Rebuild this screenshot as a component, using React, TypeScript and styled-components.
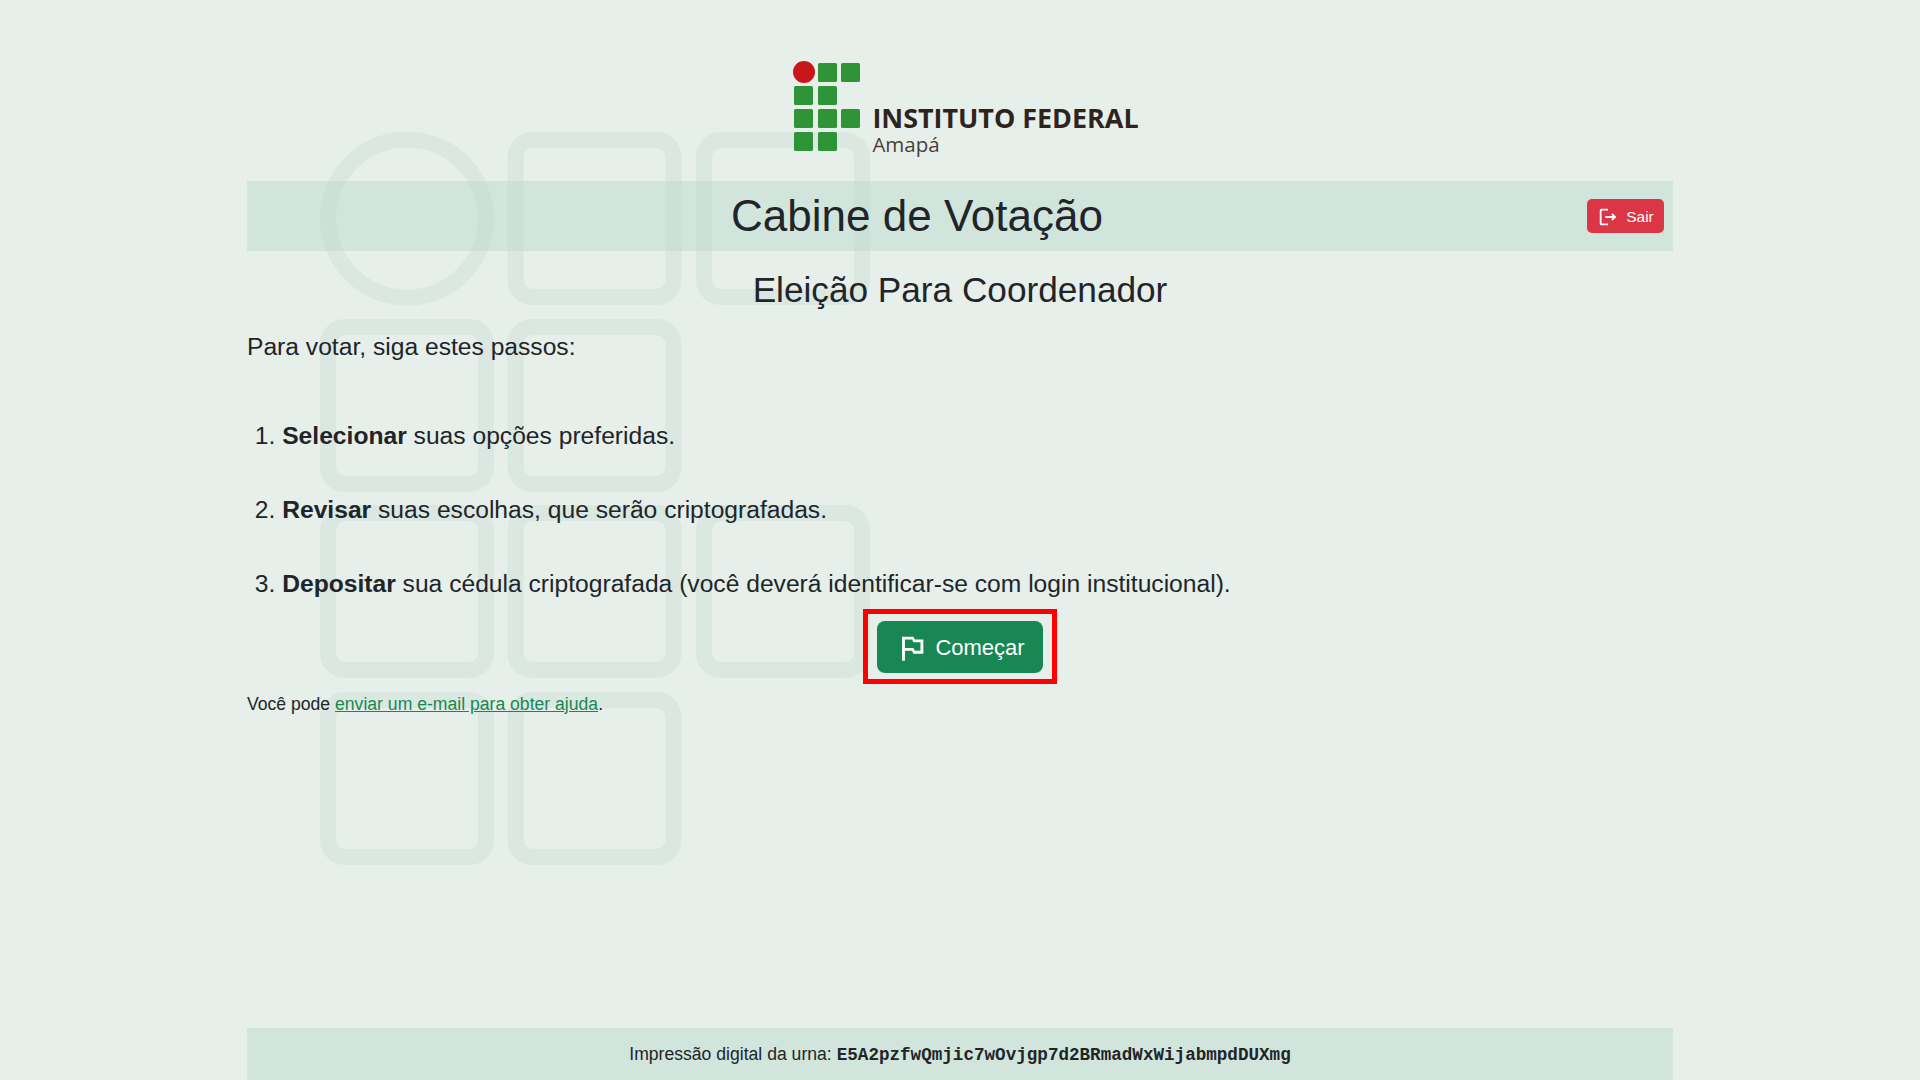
import React from "react";
import styled, { createGlobalStyle } from "styled-components";
import { MdOutlinedFlag, MdOutlineLogout } from "react-icons/md";

const GlobalStyle = createGlobalStyle`
    html, body {
        margin: 0;
        padding: 0;
        background-color: #e6efea;
        color: #212529;
        font-family: "Liberation Sans", Arial, sans-serif;
        font-size: 17.6px;
    }
`;

const Page = styled.div`
    position: relative;
    width: 1426px;
    height: 1080px;
    margin: 0 auto;
    display: flex;
    flex-direction: column;
`;

const Watermark = styled.svg`
    position: absolute;
    left: 73px;
    top: 132px;
    width: 552px;
    height: 733px;
    color: #dbe7e1;
`;

const Content = styled.main`
    position: relative;
    flex: 1;
    display: flex;
    flex-direction: column;
`;

const LogoRow = styled.div`
    display: flex;
    justify-content: center;
    align-items: flex-start;
    gap: 12px;
    height: 181px;
    padding: 61px 0 0 12px;
    box-sizing: border-box;
`;

const LogoText = styled.div`
    display: flex;
    flex-direction: column;
    margin-top: 42px;
    font-family: "Open Sans", sans-serif;
`;

const LogoName = styled.span`
    font-size: 26.9px;
    line-height: 29px;
    font-weight: 700;
    color: #2f241d;
    white-space: nowrap;
`;

const LogoPlace = styled.span`
    font-size: 20.5px;
    line-height: 24px;
    color: #4a4038;
`;

const Header = styled.header`
    display: flex;
    align-items: center;
    height: 70px;
    padding-right: 9px;
    background-color: rgba(176, 212, 196, 0.38);
`;

const Title = styled.h1`
    flex: 1;
    margin: 0;
    font-size: 44px;
    line-height: 68px;
    font-weight: 400;
    text-align: center;
`;

const Button = styled.button<{ $color: string; $big?: boolean }>`
    display: inline-flex;
    align-items: center;
    justify-content: center;
    border: none;
    color: #fff;
    font-family: inherit;
    background-color: ${(p) => p.$color};
    border-radius: ${(p) => (p.$big ? "8px" : "5px")};
    width: ${(p) => (p.$big ? "166px" : "77px")};
    height: ${(p) => (p.$big ? "52px" : "34px")};
    gap: ${(p) => (p.$big ? "6px" : "7px")};
    font-size: ${(p) => (p.$big ? "22px" : "15.4px")};
    padding: 2px 0 0;
`;

const Subtitle = styled.h2`
    margin: 15px 0 0;
    font-size: 35.2px;
    line-height: 48px;
    font-weight: 400;
    text-align: center;
`;

const Lead = styled.p`
    margin: 14px 0 0;
    font-size: 24.64px;
    line-height: 37px;
`;

const Steps = styled.ol`
    margin: 52px 0 0;
    padding: 0 0 0 35.2px;
    font-size: 24.64px;
    line-height: 37px;
`;

const Step = styled.li`
    margin-bottom: 37px;

    &:last-child {
        margin-bottom: 0;
    }
`;

const StartBox = styled.div`
    align-self: center;
    display: flex;
    margin-top: 7px;
    padding: 7px 9px 6px;
    border: 5px solid #ff0000;
`;

const Help = styled.p`
    margin: 7px 0 0;
    line-height: 26.4px;
`;

const HelpLink = styled.a`
    color: #198754;
    text-decoration: underline;
`;

const Footer = styled.footer`
    position: relative;
    height: 52px;
    padding-top: 1px;
    box-sizing: border-box;
    display: flex;
    align-items: center;
    justify-content: center;
    gap: 5px;
    background-color: rgba(176, 212, 196, 0.38);
`;

const Fingerprint = styled.code`
    font-family: "Liberation Mono", monospace;
    font-weight: 700;
    font-size: 17.6px;
`;

const squares = [
    [187.5, 0], [376, 0],
    [0, 187], [187.5, 187],
    [0, 373], [187.5, 373], [376, 373],
    [0, 560], [187.5, 560],
];

const logoSquares = [
    [24, 0], [47, 0],
    [0, 23], [24, 23],
    [0, 46], [24, 46], [47, 46],
    [0, 69], [24, 69],
];

const LogoMark = styled.svg`
    flex-shrink: 0;
`;

const IfLogo = () => (
    <LogoMark width="67" height="90" viewBox="0 0 67 90">
        <circle cx="11" cy="11" r="11" fill="#c9161b" />
        {logoSquares.map(([x, y]) => (
            <rect key={`${x}-${y}`} x={x + 1} y={y + 2} width="19" height="19" rx="1.5" fill="#2f9438" />
        ))}
    </LogoMark>
);

export default function App() {
    return (
        <Page>
            <GlobalStyle />
            <Watermark viewBox="0 0 552 733" fill="none" stroke="currentColor" strokeWidth="16">
                <circle cx="87" cy="86.5" r="79" />
                {squares.map(([x, y]) => (
                    <rect key={`${x}-${y}`} x={x + 8} y={y + 8} width="158" height="157" rx="17" />
                ))}
            </Watermark>
            <Content>
                <LogoRow>
                    <IfLogo />
                    <LogoText>
                        <LogoName>INSTITUTO FEDERAL</LogoName>
                        <LogoPlace>Amapá</LogoPlace>
                    </LogoText>
                </LogoRow>
                <Header>
                    <Title>Cabine de Votação</Title>
                    <Button $color="#dc3545">
                        <MdOutlineLogout size={22} />
                        Sair
                    </Button>
                </Header>
                <Subtitle>Eleição Para Coordenador</Subtitle>
                <Lead>Para votar, siga estes passos:</Lead>
                <Steps>
                    <Step><b>Selecionar</b> suas opções preferidas.</Step>
                    <Step><b>Revisar</b> suas escolhas, que serão criptografadas.</Step>
                    <Step><b>Depositar</b> sua cédula criptografada (você deverá identificar-se com login institucional).</Step>
                </Steps>
                <StartBox>
                    <Button $color="#198754" $big>
                        <MdOutlinedFlag size={34} />
                        Começar
                    </Button>
                </StartBox>
                <Help>Você pode <HelpLink href="#">enviar um e-mail para obter ajuda</HelpLink>.</Help>
            </Content>
            <Footer>
                <span>Impressão digital da urna:</span>
                <Fingerprint>E5A2pzfwQmjic7wOvjgp7d2BRmadWxWijabmpdDUXmg</Fingerprint>
            </Footer>
        </Page>
    );
}
